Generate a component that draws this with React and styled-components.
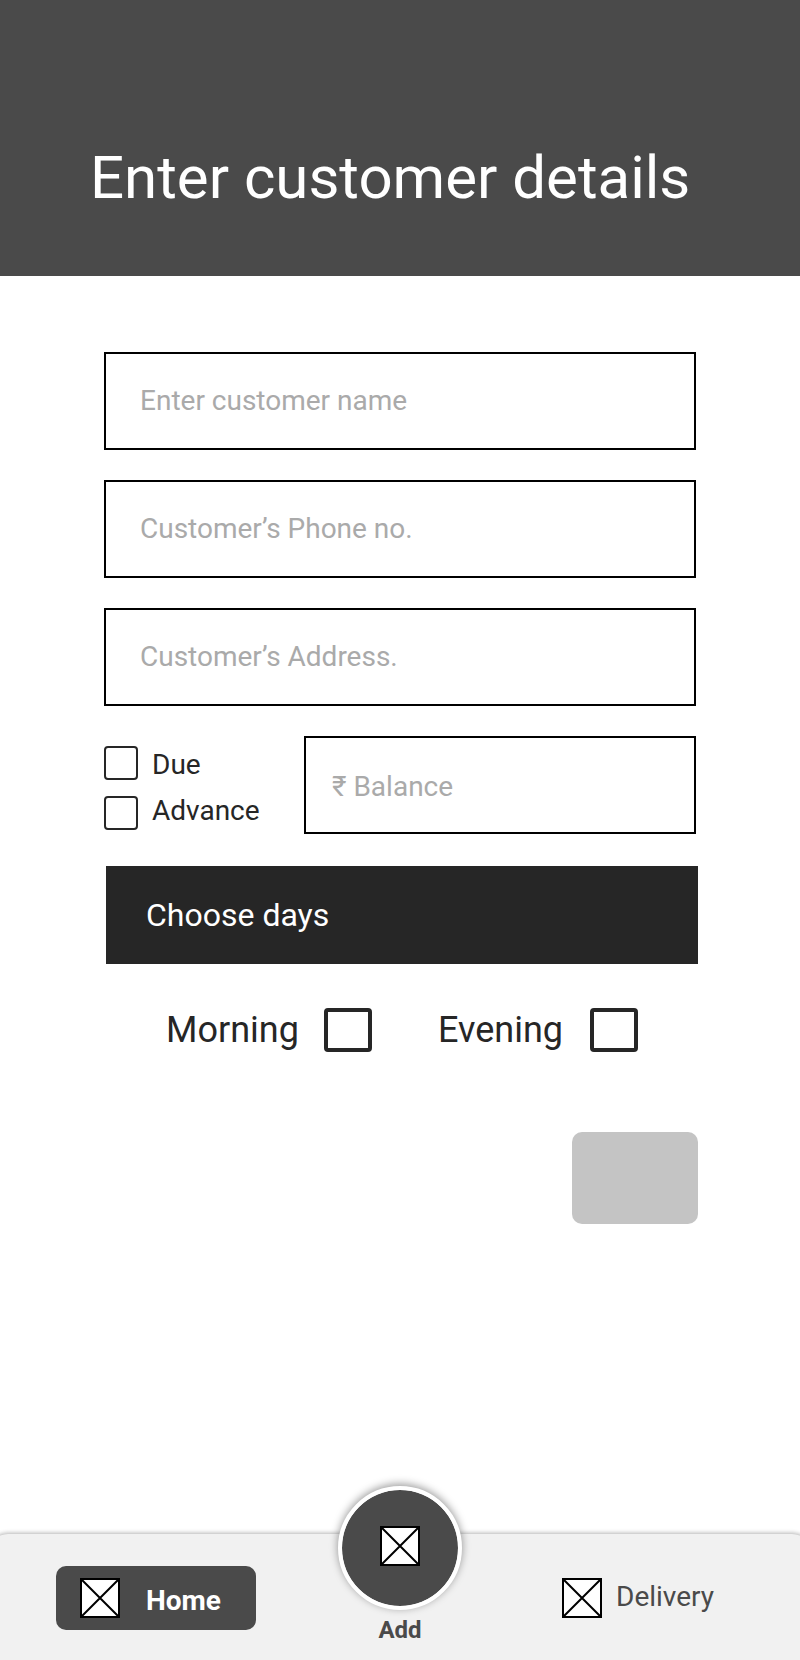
import React from "react";
import styled, { createGlobalStyle } from "styled-components";

const GlobalStyle = createGlobalStyle`
  * {
    box-sizing: border-box;
  }
  body {
    margin: 0;
    background: #fff;
    font-family: Roboto, sans-serif;
  }
`;

const Container = styled.div`
  display: flex;
  flex-direction: column;
  width: 800px;
  height: 1660px;
  overflow: hidden;
`;

const Header = styled.header`
  height: 276px;
  padding: 142px 0 0 90px;
  background: #4a4a4a;
`;
const Title = styled.h1`
  margin: 0;
  font-size: 60px;
  line-height: 71px;
  font-weight: 400;
  color: #fff;
  white-space: nowrap;
`;

const Form = styled.main`
  flex: 1;
  display: flex;
  flex-direction: column;
  padding: 76px 104px 0;
`;
const Field = styled.div`
  flex: ${(props) => (props.$grow ? "1" : "none")};
  height: 98px;
  padding: ${(props) => props.$pad || "30px 34px"};
  margin-bottom: 30px;
  border: 2px solid #000;
  font-size: 28px;
  line-height: 33px;
  color: #aaa;
  white-space: nowrap;
`;
const Row = styled.div`
  display: flex;
`;
const Options = styled.div`
  display: flex;
  flex-direction: column;
  gap: 16px;
  width: 200px;
  padding-top: 10px;
`;
const Option = styled.label`
  display: flex;
  gap: 14px;
  height: 34px;
`;
const OptionText = styled.span`
  margin-top: ${(props) => props.$shift};
  font-size: 28px;
  line-height: 33px;
  color: #262626;
`;
const Checkbox = styled.input.attrs({ type: "checkbox" })`
  appearance: none;
  flex: none;
  width: 34px;
  height: 34px;
  margin: 0;
  border: 2px solid #262626;
  border-radius: 4px;
`;
const BigCheckbox = styled(Checkbox)`
  width: 48px;
  height: 44px;
  border-width: 4px;
`;

const DaysButton = styled.div`
  width: 592px;
  height: 98px;
  margin: 2px 0 0 2px;
  padding: 30px 40px;
  background: #262626;
  font-size: 32px;
  line-height: 38px;
  color: #fff;
`;
const Times = styled.div`
  display: flex;
  gap: 66px;
  margin-top: 44px;
  padding-left: 62px;
`;
const Time = styled.label`
  display: flex;
  flex: none;
  justify-content: space-between;
  width: ${(props) => props.$width};
`;
const TimeText = styled.span`
  margin-top: 1px;
  font-size: 36px;
  line-height: 42px;
  color: #262626;
`;
const Submit = styled.div`
  align-self: flex-end;
  width: 126px;
  height: 92px;
  margin: 80px -2px 0 0;
  border-radius: 10px;
  background: #c4c4c4;
`;

/* wider than the screen, so only the end of each rounded corner shows */
const Nav = styled.nav`
  display: grid;
  grid-template-columns: 200px 124px 238px;
  column-gap: 82px;
  height: 126px;
  margin: 0 -12px;
  padding-left: 68px;
  border-radius: 20px 20px 0 0;
  background: #f1f1f1;
  box-shadow: 0 -1px 4px rgba(0, 0, 0, 0.3);
`;
const HomeTab = styled.div`
  display: flex;
  width: 200px;
  height: 64px;
  margin-top: 32px;
  padding: 12px 24px;
  border-radius: 10px;
  background: #4a4a4a;
`;
const NavText = styled.span`
  margin: ${(props) => props.$margin};
  font-size: 28px;
  line-height: 33px;
  font-weight: ${(props) => (props.$active ? "700" : "400")};
  color: ${(props) => (props.$active ? "#fff" : "#4a4a4a")};
`;
const AddTab = styled.div`
  display: flex;
  flex-direction: column;
  align-items: center;
  margin-top: -48px;
`;
const AddCircle = styled.div`
  display: flex;
  justify-content: center;
  flex: none;
  width: 124px;
  height: 124px;
  padding-top: 36px;
  border: 4px solid #fff;
  border-radius: 50%;
  background: #4a4a4a;
  background-clip: padding-box;
  box-shadow: 0 -2px 8px rgba(0, 0, 0, 0.4);
`;
const AddText = styled.span`
  margin-top: 6px;
  font-size: 24px;
  line-height: 28px;
  font-weight: 700;
  color: #4a4a4a;
`;
const DeliveryTab = styled.div`
  display: flex;
  margin: 44px 0 0 18px;
`;
const Icon = styled.svg`
  flex: none;
  width: 40px;
  height: 40px;
`;

const BoxIcon = () => (
  <Icon viewBox="0 0 40 40" fill="none" stroke="#000" strokeWidth="2">
    <rect x="1" y="1" width="38" height="38" fill="#fff" />
    <path d="M1 1L39 39M39 1L1 39" />
  </Icon>
);

const App = () => {
  return (
    <Container>
      <GlobalStyle />
      <Header>
        <Title>Enter customer details</Title>
      </Header>

      <Form>
        <Field>Enter customer name</Field>
        <Field>Customer’s Phone no.</Field>
        <Field>Customer’s Address.</Field>
        <Row>
          <Options>
            <Option>
              <Checkbox />
              <OptionText $shift="2px">Due</OptionText>
            </Option>
            <Option>
              <Checkbox />
              <OptionText $shift="-2px">Advance</OptionText>
            </Option>
          </Options>
          <Field $grow $pad="32px 26px">
            ₹ Balance
          </Field>
        </Row>
        <DaysButton>Choose days</DaysButton>
        <Times>
          <Time $width="206px">
            <TimeText>Morning</TimeText>
            <BigCheckbox />
          </Time>
          <Time $width="200px">
            <TimeText>Evening</TimeText>
            <BigCheckbox />
          </Time>
        </Times>
        <Submit />
      </Form>

      <Nav>
        <HomeTab>
          <BoxIcon />
          <NavText $active $margin="6px 0 0 26px">
            Home
          </NavText>
        </HomeTab>
        <AddTab>
          <AddCircle>
            <BoxIcon />
          </AddCircle>
          <AddText>Add</AddText>
        </AddTab>
        <DeliveryTab>
          <BoxIcon />
          <NavText $margin="2px 0 0 14px">Delivery</NavText>
        </DeliveryTab>
      </Nav>
    </Container>
  );
};

export default App;
